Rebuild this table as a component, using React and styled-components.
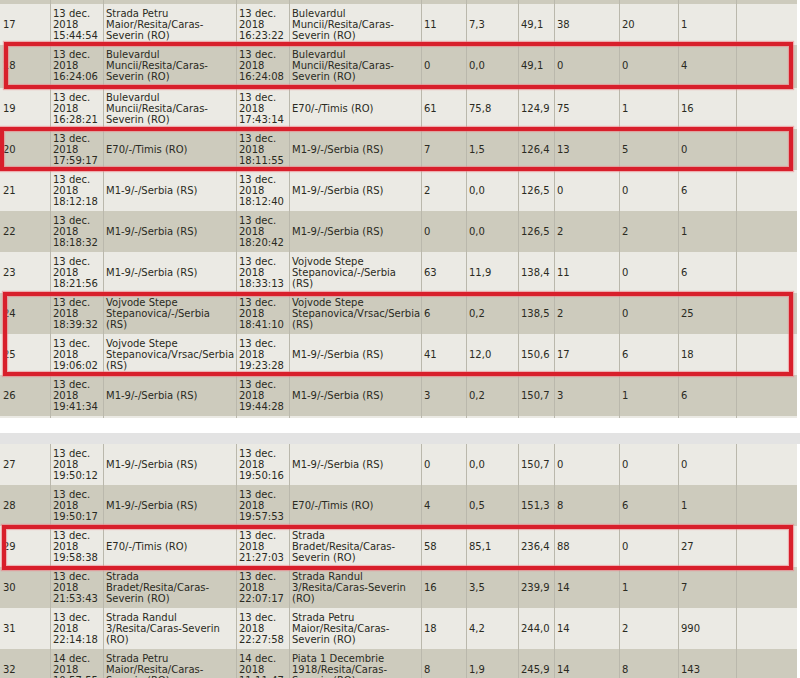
import React from "react";
import styled, { createGlobalStyle, css } from "styled-components";

const GlobalStyle = createGlobalStyle`
  html, body { margin: 0; padding: 0; background: #ffffff; }
  body { font-family: "DejaVu Sans", Verdana, sans-serif; }
`;

const COLS = "50px 53px 133px 53px 132px 45px 52px 36px 65px 59px 58px 61px";

const Page = styled.div`
  width: 800px;
  height: 678px;
  overflow: hidden;
  background: #ffffff;
`;

const Sheet = styled.div`
  width: 797px;
  display: flex;
  flex-direction: column;
  & > * { flex-shrink: 0; }
`;

const tones = {
  light: "#ebeae4",
  dark: "#cdcbbd",
};

const Row = styled.div`
  display: grid;
  grid-template-columns: ${COLS};
  background: ${(p) => tones[p.$tone]};
  ${(p) =>
    p.$h != null &&
    css`
      height: ${p.$h}px;
      overflow: hidden;
    `}
`;

const Cell = styled.div`
  box-sizing: border-box;
  display: flex;
  flex-direction: column;
  justify-content: center;
  padding: 4px 2px ${(p) => (p.$tall ? 6 : 4)}px 2px;
  border-left: 1px solid #bab8ac;
  font-size: 10px;
  line-height: 11px;
  color: #2a2a22;
  min-height: ${(p) => (p.$tall ? 43 : 41)}px;
  &:first-child {
    border-left: none;
    padding-left: 3px;
  }
`;

const SliceCell = styled.div`
  border-left: 1px solid #bab8ac;
  &:first-child { border-left: none; }
`;

const Line = styled.span`
  display: block;
  white-space: nowrap;
`;

const Highlight = styled.div`
  position: relative;
  display: flex;
  flex-direction: column;
  &::after {
    content: "";
    position: absolute;
    top: ${(p) => p.$t}px;
    bottom: ${(p) => p.$b}px;
    left: ${(p) => p.$l}px;
    right: 4px;
    border: 4px solid #d81f2b;
    box-shadow: 0 0 1px 1px rgba(240, 120, 130, 0.55),
      inset 0 0 1px 1px rgba(240, 120, 130, 0.55);
    pointer-events: none;
    z-index: 2;
  }
`;

const Gap = styled.div`
  height: 15px;
  background: #ffffff;
`;

const Band = styled.div`
  height: 11px;
  width: 800px;
  background: #e3e3e3;
`;

const BUL = ["Bulevardul", "Muncii/Resita/Caras-", "Severin (RO)"];
const PETRU = ["Strada Petru", "Maior/Resita/Caras-", "Severin (RO)"];
const E70 = ["E70/-/Timis (RO)"];
const M19 = ["M1-9/-/Serbia (RS)"];
const VSS = ["Vojvode Stepe", "Stepanovica/-/Serbia", "(RS)"];
const VSV = ["Vojvode Stepe", "Stepanovica/Vrsac/Serbia", "(RS)"];
const BRADET = ["Strada", "Bradet/Resita/Caras-", "Severin (RO)"];
const RANDUL = ["Strada Randul", "3/Resita/Caras-Severin", "(RO)"];
const PIATA = ["Piata 1 Decembrie", "1918/Resita/Caras-", "Severin (RO)"];

const d = (t, day = "13") => [`${day} dec.`, "2018", t];

const rows = {
  17: [d("15:44:54"), PETRU, d("16:23:22"), BUL, "11", "7,3", "49,1", "38", "20", "1"],
  18: [d("16:24:06"), BUL, d("16:24:08"), BUL, "0", "0,0", "49,1", "0", "0", "4"],
  19: [d("16:28:21"), BUL, d("17:43:14"), E70, "61", "75,8", "124,9", "75", "1", "16"],
  20: [d("17:59:17"), E70, d("18:11:55"), M19, "7", "1,5", "126,4", "13", "5", "0"],
  21: [d("18:12:18"), M19, d("18:12:40"), M19, "2", "0,0", "126,5", "0", "0", "6"],
  22: [d("18:18:32"), M19, d("18:20:42"), M19, "0", "0,0", "126,5", "2", "2", "1"],
  23: [d("18:21:56"), M19, d("18:33:13"), VSS, "63", "11,9", "138,4", "11", "0", "6"],
  24: [d("18:39:32"), VSS, d("18:41:10"), VSV, "6", "0,2", "138,5", "2", "0", "25"],
  25: [d("19:06:02"), VSV, d("19:23:28"), M19, "41", "12,0", "150,6", "17", "6", "18"],
  26: [d("19:41:34"), M19, d("19:44:28"), M19, "3", "0,2", "150,7", "3", "1", "6"],
  27: [d("19:50:12"), M19, d("19:50:16"), M19, "0", "0,0", "150,7", "0", "0", "0"],
  28: [d("19:50:17"), M19, d("19:57:53"), E70, "4", "0,5", "151,3", "8", "6", "1"],
  29: [d("19:58:38"), E70, d("21:27:03"), BRADET, "58", "85,1", "236,4", "88", "0", "27"],
  30: [d("21:53:43"), BRADET, d("22:07:17"), RANDUL, "16", "3,5", "239,9", "14", "1", "7"],
  31: [d("22:14:18"), RANDUL, d("22:27:58"), PETRU, "18", "4,2", "244,0", "14", "2", "990"],
  32: [d("10:57:55", "14"), PETRU, d("11:11:47", "14"), PIATA, "8", "1,9", "245,9", "14", "8", "143"],
};

function DataRow({ n, tall }) {
  const tone = n % 2 === 0 ? "dark" : "light";
  const cells = [String(n), ...rows[n], ""];
  return (
    <Row $tone={tone}>
      {cells.map((c, i) => (
        <Cell key={i} $tall={tall}>
          {Array.isArray(c) ? c.map((l, j) => <Line key={j}>{l}</Line>) : <Line>{c}</Line>}
        </Cell>
      ))}
    </Row>
  );
}

function Slice({ tone, h }) {
  return (
    <Row $tone={tone} $h={h}>
      {Array.from({ length: 12 }).map((_, i) => (
        <SliceCell key={i} />
      ))}
    </Row>
  );
}

export default function App() {
  return (
    <>
      <GlobalStyle />
      <Page>
        <Sheet>
          <Slice tone="dark" h={4} />
          <DataRow n={17} />
          <Highlight $t={-3} $b={-1} $l={4}>
            <DataRow n={18} tall />
          </Highlight>
          <DataRow n={19} />
          <Highlight $t={-2} $b={-1} $l={0}>
            <DataRow n={20} />
          </Highlight>
          <DataRow n={21} />
          <DataRow n={22} />
          <DataRow n={23} />
          <Highlight $t={-1} $b={-1} $l={3}>
            <DataRow n={24} />
            <DataRow n={25} />
          </Highlight>
          <DataRow n={26} />
          <Slice tone="light" h={2} />
        </Sheet>
        <Gap />
        <Band />
        <Sheet>
          <DataRow n={27} />
          <DataRow n={28} />
          <Highlight $t={-1} $b={-3} $l={2}>
            <DataRow n={29} />
          </Highlight>
          <DataRow n={30} />
          <DataRow n={31} />
          <DataRow n={32} />
        </Sheet>
      </Page>
    </>
  );
}
